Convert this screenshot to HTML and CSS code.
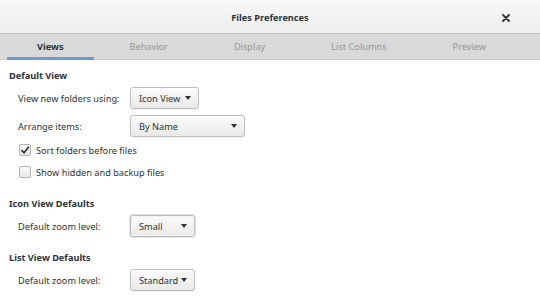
FILE: index.html
```html
<!DOCTYPE html>
<html lang="en">
<head>
    <meta charset="UTF-8">
    <title>Files Preferences</title>
    <link rel="stylesheet" href="styles.css">
</head>
<body>
    <div class="window">
        <!-- Title bar -->
        <header class="titlebar">
            <span class="title">Files Preferences</span>
            <span class="close">
                <svg width="8" height="8" viewBox="0 0 8 8"><path d="M1 1 L7 7 M7 1 L1 7" stroke="#2e3436" stroke-width="1.8" stroke-linecap="round"/></svg>
            </span>
        </header>

        <!-- Tabs -->
        <nav class="tabs">
            <div class="tab active">Views</div>
            <div class="tab">Behavior</div>
            <div class="tab">Display</div>
            <div class="tab">List Columns</div>
            <div class="tab">Preview</div>
        </nav>

        <!-- Views page -->
        <main class="page">
            <section class="group">
                <h2>Default View</h2>
                <div class="row">
                    <span class="label">View new folders using:</span>
                    <div class="combo combo-icon">Icon View <span class="arrow"></span></div>
                </div>
                <div class="row">
                    <span class="label">Arrange items:</span>
                    <div class="combo combo-wide">By Name <span class="arrow"></span></div>
                </div>
                <div class="check-row first">
                    <span class="checkbox checked">
                        <svg width="10" height="10" viewBox="0 0 10 10"><path d="M1.5 5.2 L4 7.8 L8.8 1.8" fill="none" stroke="#2e3436" stroke-width="1.7"/></svg>
                    </span>
                    Sort folders before files
                </div>
                <div class="check-row">
                    <span class="checkbox"></span>
                    Show hidden and backup files
                </div>
            </section>

            <section class="group">
                <h2>Icon View Defaults</h2>
                <div class="row">
                    <span class="label">Default zoom level:</span>
                    <div class="combo combo-small focused">Small <span class="arrow"></span></div>
                </div>
            </section>

            <section class="group">
                <h2>List View Defaults</h2>
                <div class="row">
                    <span class="label">Default zoom level:</span>
                    <div class="combo combo-small">Standard <span class="arrow"></span></div>
                </div>
            </section>
        </main>
    </div>
</body>
</html>
```

FILE: styles.css
```css
/* ===== Base ===== */
body {
    margin: 0;
    background: #ffffff;
    font-family: "Noto Sans", "Open Sans", sans-serif;
    font-size: 9.2px;
    color: #2e3436;
}

.window {
    width: 540px;
    min-height: 301px;
    background: #ffffff;
}

/* ===== Title bar ===== */
.titlebar {
    height: 34px;
    display: flex;
    align-items: center;
    justify-content: center;
    background: linear-gradient(#f7f7f7, #ededed);
    border-top: 1px solid #fdfdfd;
    border-bottom: 1px solid #c4c4c4;
    box-sizing: border-box;
    position: relative;
}

.title {
    font-weight: bold;
    font-size: 9.2px;
    color: #2e3436;
}

.close {
    position: absolute;
    right: 30px;
    top: 13px;
    display: flex;
}

/* ===== Tabs ===== */
.tabs {
    display: flex;
    gap: 6px;
    padding: 0 7px;
    height: 26px;
    background: #d9d9d9;
    border-bottom: 1px solid #cdcdcd;
    box-sizing: border-box;
}

.tab {
    padding: 0 30px;
    line-height: 25px;
    color: #959595;
    border-bottom: 3px solid transparent;
    box-sizing: border-box;
    height: 26px;
    text-align: center;
}

.tab.active {
    color: #2e3436;
    font-weight: bold;
    border-bottom-color: #6a9bd0;
}

/* ===== Page ===== */
.page {
    padding: 9px 0 0 9px;
}

.group + .group {
    margin-top: 14px;
}

.group h2 {
    margin: 0 0 4px;
    font-size: 9.2px;
    font-weight: bold;
    line-height: 14px;
}

.row {
    display: flex;
    align-items: center;
    padding-left: 9px;
    height: 22px;
}

.row + .row {
    margin-top: 6px;
}

.label {
    width: 112px;
    flex-shrink: 0;
}

/* ===== Combo boxes ===== */
.combo {
    height: 22px;
    box-sizing: border-box;
    display: flex;
    align-items: center;
    justify-content: space-between;
    padding: 0 7px 0 8px;
    border: 1px solid #bdbdbb;
    border-radius: 3px;
    background: linear-gradient(#fbfbfb, #e9e9e8);
    box-shadow: inset 0 1px #ffffff, 0 1px 1px rgba(0, 0, 0, 0.05);
}

.combo-icon { width: 69px; }
.combo-wide { width: 115px; }
.combo-small { width: 65px; }

.combo.focused {
    box-shadow: inset 0 0 0 1px #f2f2f2, 0 0 0 1px #e2e2e2;
}

.arrow {
    width: 0;
    height: 0;
    margin-left: 3px;
    border-left: 3.5px solid transparent;
    border-right: 3.5px solid transparent;
    border-top: 4px solid #2e3436;
}

/* ===== Check buttons ===== */
.check-row {
    display: flex;
    align-items: center;
    gap: 5px;
    height: 22px;
    padding-left: 10px;
}

.check-row.first {
    margin-top: 2px;
}

.checkbox {
    width: 12px;
    height: 12px;
    box-sizing: border-box;
    border: 1px solid #b3b3b1;
    border-radius: 2px;
    background: linear-gradient(#fafafa, #e6e6e5);
    display: flex;
    align-items: center;
    justify-content: center;
}
```
